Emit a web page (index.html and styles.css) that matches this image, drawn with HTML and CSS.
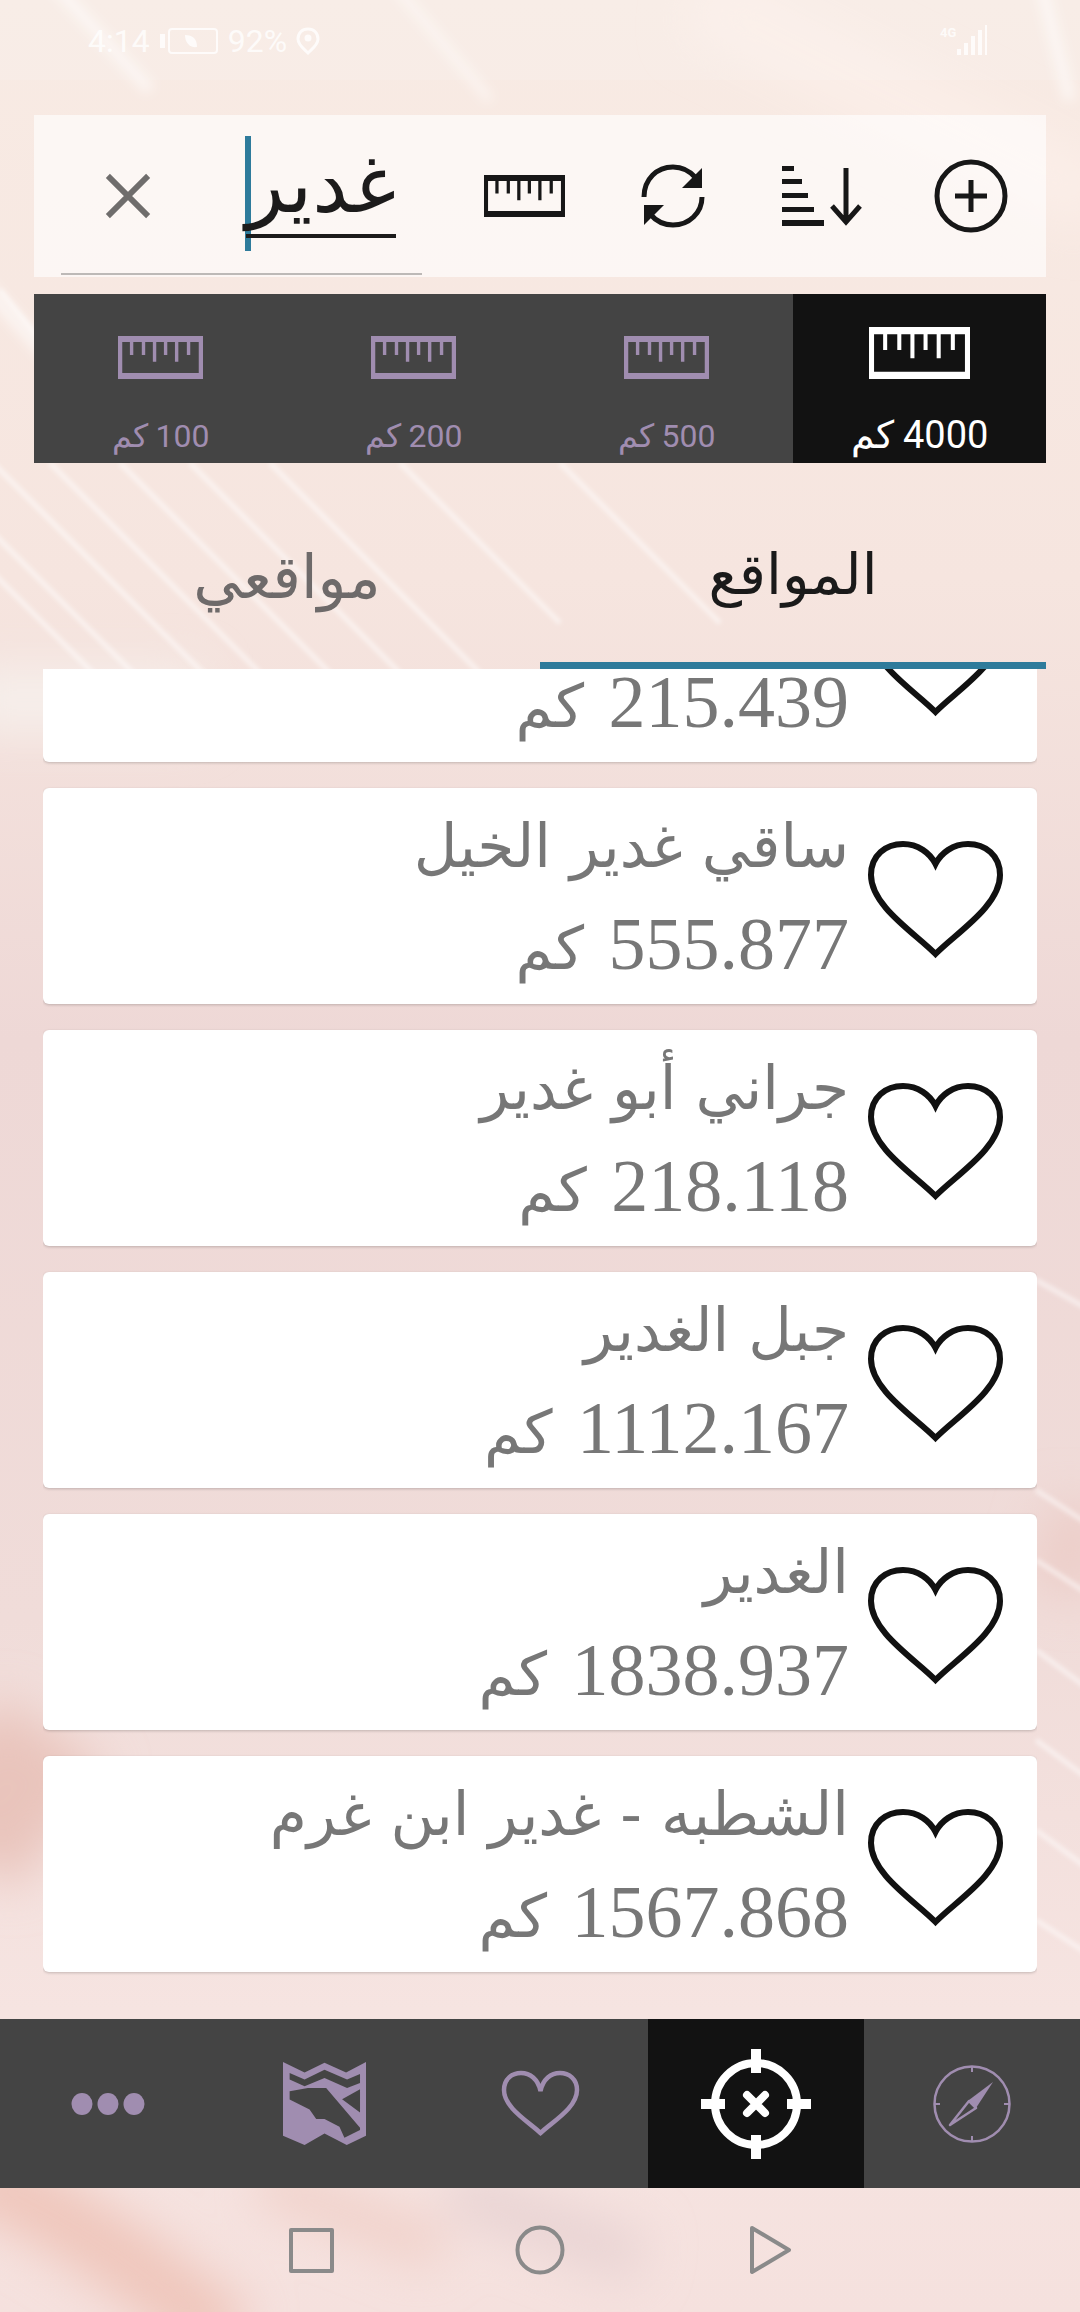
FILE: index.html
```html
<!DOCTYPE html>
<html lang="ar">
<head>
<meta charset="utf-8">
<link rel="stylesheet" href="styles.css">
</head>
<body>
<svg width="0" height="0" class="defs">
  <symbol id="ruler" viewBox="0 0 100 50" preserveAspectRatio="none">
    <path d="M0 0H100V50H0ZM5 7V43H95V7H85V22H81V7H71V30H67V7H58V22H54V7H45V30H41V7H32V22H28V7H18V22H14V7Z" fill-rule="evenodd"/>
  </symbol>
  <symbol id="heart" viewBox="0 0 137 119">
    <path d="M68.500 114C48 93 4 66 4 35C4 15 19 4 36 4C51 4 63 13 68.500 24C74 13 86 4 101 4C118 4 133 15 133 35C133 66 89 93 68.500 114Z" fill="none" stroke="currentColor" stroke-width="6" stroke-linejoin="miter"/>
  </symbol>
  <filter id="thin" x="-20%" y="-20%" width="140%" height="140%"><feGaussianBlur stdDeviation="2"/></filter>
  <filter id="soft" x="-20%" y="-20%" width="140%" height="140%"><feGaussianBlur stdDeviation="6"/></filter>
  <filter id="softer" x="-20%" y="-20%" width="140%" height="140%"><feGaussianBlur stdDeviation="24"/></filter>
</svg>

<div class="phone">
  <svg class="wallpaper" viewBox="0 0 1080 2312">
    <defs>
      <linearGradient id="wall" x1="0" y1="0" x2="0" y2="1">
        <stop offset="0" stop-color="#f8ebe4"/>
        <stop offset=".25" stop-color="#f6e5df"/>
        <stop offset=".45" stop-color="#eed8d6"/>
        <stop offset=".7" stop-color="#f0dcd9"/>
        <stop offset=".87" stop-color="#f6e4e1"/>
        <stop offset="1" stop-color="#f5e1de"/>
      </linearGradient>
    </defs>
    <rect width="1080" height="2312" fill="url(#wall)"/>
    <g filter="url(#softer)" fill="none" stroke-width="70">
      <path d="M-40 2170C60 2210 130 2260 230 2340" stroke="#efc6bb"/>
      <path d="M260 2180L440 2250" stroke="#f0cfc7" stroke-width="40"/>
      <path d="M450 2190L640 2260" stroke="#e8d3d3" stroke-width="50"/>
      <path d="M-40 700H200" stroke="#f6f0ec" stroke-width="60"/>
      <path d="M-50 1750C-20 1780 20 1800 60 1830" stroke="#e9c4bc" stroke-width="150"/>
      <path d="M1100 1560L1040 1540" stroke="#eccdc8" stroke-width="90"/>
      <path d="M700 0L1100 200" stroke="#fbeee8"/>
    </g>
    <g filter="url(#thin)" fill="none" stroke="#fff" stroke-opacity=".5" stroke-width="5">
      <path d="M-30 440L210 680"/>
      <path d="M-30 510L140 680"/>
      <path d="M-10 570L100 680"/>
      <path d="M50 463L260 673"/>
      <path d="M120 463L330 673"/>
      <path d="M190 463L400 673"/>
      <path d="M270 463L480 673"/>
      <path d="M400 463L560 623"/>
      <path d="M560 463L720 623"/>
      <path d="M0 290L40 340"/>
      <path d="M1036 1280L1090 1310"/>
      <path d="M1036 1490L1090 1525"/>
      <path d="M1036 1560L1090 1595"/>
      <path d="M1036 1650L1090 1690"/>
      <path d="M1036 1740L1090 1780"/>
      <path d="M1036 1830L1090 1870"/>
      <path d="M1036 1920L1090 1955"/>
    </g>
    <g filter="url(#soft)" fill="none" stroke="#fff" stroke-opacity=".55">
      <path d="M50 -20L150 90" stroke-width="12"/>
      <path d="M390 -20L490 100" stroke-width="8"/>
      <path d="M1040 -20L1070 100" stroke-width="12"/>
      <path d="M-20 280L60 370" stroke-width="14"/>
    </g>
  </svg>

  <div class="status">
    <div class="status-left">
      <span>4:14</span>
      <svg class="battery" viewBox="0 0 58 26"><path d="M0 6h5v14H0z"/><rect x="9" y="1" width="48" height="24" rx="3" fill="none" stroke="currentColor" stroke-width="2"/><path d="M25 7c8 0 12 4 12 12c-7 1-12-4-12-12z"/></svg>
      <span>92%</span>
      <svg class="pin" viewBox="0 0 24 28"><path d="M12 2C6 2 2 6 2 12c0 6 6 10 10 14c4-4 10-8 10-14C22 6 18 2 12 2z" fill="none" stroke="currentColor" stroke-width="3"/><circle cx="12" cy="11" r="3.500"/></svg>
    </div>
    <div class="signal">
      <span class="signal-text">4G</span>
      <svg viewBox="0 0 32 30"><path d="M1 24h4v6H1zM8 18h4v12H8zM15 11h4v19h-4zM22 5h4v25h-4zM29 0h2v30h-2z"/></svg>
    </div>
  </div>

  <div class="search-bar">
    <div class="search-box">
      <svg class="icon-close" viewBox="0 0 48 48"><path d="M3 3L45 45M45 3L3 45" stroke="#6f6d6c" stroke-width="6"/></svg>
      <div class="search-input"><span class="caret"></span><span class="query">غدير</span></div>
      <div class="search-line"></div>
    </div>
    <svg class="icon-ruler"><use href="#ruler"/></svg>
    <svg class="icon-refresh" viewBox="0 0 66 66"><path d="M4 34C4 16 17 4 33 4C42 4 50 8 56 15M62 34C62 50 49 62 33 62C24 62 16 58 10 51" fill="none" stroke="#171717" stroke-width="5"/><path d="M62 5V25H42ZM4 62V42H24Z" fill="#171717"/></svg>
    <svg class="icon-sort" viewBox="0 0 81 60"><path d="M0 0h12v5H0zM0 13h20v5H0zM0 27h26v5H0zM0 41h32v5H0zM0 54h42v6H0z" fill="#171717"/><path d="M64 2V56M50 40L64 56L78 40" fill="none" stroke="#171717" stroke-width="5"/></svg>
    <svg class="icon-plus" viewBox="0 0 74 74"><circle cx="37" cy="37" r="34" fill="none" stroke="#171717" stroke-width="5"/><path d="M37 21V53M21 37H53" stroke="#171717" stroke-width="5"/></svg>
  </div>

  <div class="ranges">
    <div class="range"><svg><use href="#ruler"/></svg><span dir="rtl">100 كم</span></div>
    <div class="range"><svg><use href="#ruler"/></svg><span dir="rtl">200 كم</span></div>
    <div class="range"><svg><use href="#ruler"/></svg><span dir="rtl">500 كم</span></div>
    <div class="range active"><svg><use href="#ruler"/></svg><span dir="rtl">4000 كم</span></div>
  </div>

  <div class="tabs">
    <div class="tab">مواقعي</div>
    <div class="tab selected">المواقع</div>
  </div>

  <div class="list">
    <div class="list-inner">
      <div class="card"><svg class="heart"><use href="#heart"/></svg><div class="card-text"><div class="name">&nbsp;</div><div class="dist">215.439 <span>كم</span></div></div></div>
      <div class="card"><svg class="heart"><use href="#heart"/></svg><div class="card-text"><div class="name">ساقي غدير الخيل</div><div class="dist">555.877 <span>كم</span></div></div></div>
      <div class="card"><svg class="heart"><use href="#heart"/></svg><div class="card-text"><div class="name">جراني أبو غدير</div><div class="dist">218.118 <span>كم</span></div></div></div>
      <div class="card"><svg class="heart"><use href="#heart"/></svg><div class="card-text"><div class="name">جبل الغدير</div><div class="dist">1112.167 <span>كم</span></div></div></div>
      <div class="card"><svg class="heart"><use href="#heart"/></svg><div class="card-text"><div class="name">الغدير</div><div class="dist">1838.937 <span>كم</span></div></div></div>
      <div class="card"><svg class="heart"><use href="#heart"/></svg><div class="card-text"><div class="name">الشطبه - غدير ابن غرم</div><div class="dist">1567.868 <span>كم</span></div></div></div>
    </div>
  </div>

  <div class="bottom-nav">
    <div class="nav-item">
      <svg class="icon-dots" viewBox="0 0 74 22"><ellipse cx="11" cy="11" rx="10.500" ry="11"/><ellipse cx="37" cy="11" rx="10.500" ry="11"/><ellipse cx="63" cy="11" rx="10.500" ry="11"/></svg>
    </div>
    <div class="nav-item">
      <svg class="icon-map" viewBox="0 0 250 250"><path d="M0 0L65 32L125 2L190 32L250 0V222L192 250L125 215L65 250L0 222ZM20 33V53L65 73L125 48L193 78L232 63V36L193 53L125 23L65 53ZM20 88V113L80 143L100 172H125L170 195L185 228L232 205V198L130 78L75 78ZM178 112L232 152V82Z" fill-rule="evenodd"/></svg>
    </div>
    <div class="nav-item">
      <svg class="icon-navheart" viewBox="0 0 79 67"><path d="M39.500 63C28 52 3 38 3 20C3 9 11 3 20 3C29 3 37 9 39.500 21C42 9 50 3 59 3C68 3 76 9 76 20C76 38 51 52 39.500 63Z" fill="none" stroke="currentColor" stroke-width="4.500"/></svg>
    </div>
    <div class="nav-item active">
      <svg class="icon-target" viewBox="0 0 110 110"><circle cx="55" cy="55" r="41" fill="none" stroke="#fff" stroke-width="8"/><path d="M55 0V24M55 86V110M0 55H24M86 55H110" stroke="#fff" stroke-width="10"/><path d="M46 46L64 64M64 46L46 64" stroke="#fff" stroke-width="8" stroke-linecap="round"/></svg>
    </div>
    <div class="nav-item">
      <svg class="icon-compass" viewBox="0 0 78 78"><circle cx="39" cy="39" r="37.500" fill="none" stroke="currentColor" stroke-width="2.500"/><path d="M39 2v5M39 71v5M2 39h5M71 39h5" stroke="currentColor" stroke-width="2"/><path d="M60 17L36 35L43 43Z"/><path d="M36 36L43 43L17 60Z" fill="none" stroke="currentColor" stroke-width="2.500" stroke-linejoin="round"/></svg>
    </div>
  </div>

  <div class="system-nav">
    <svg class="sys-square" viewBox="0 0 45 45"><path d="M2 2H43V43H2Z" fill="none" stroke="#8a8a8a" stroke-width="4" stroke-linejoin="round"/></svg>
    <svg class="sys-circle" viewBox="0 0 50 50"><circle cx="25" cy="25" r="22.500" fill="none" stroke="#8a8a8a" stroke-width="4"/></svg>
    <svg class="sys-back" viewBox="0 0 43 50"><path d="M3 3L40 25L3 47Z" fill="none" stroke="#8a8a8a" stroke-width="4" stroke-linejoin="round"/></svg>
  </div>
</div>
</body>
</html>
```
FILE: styles.css
```css
* {
  box-sizing: border-box;
}

html, body {
  margin: 0;
  padding: 0;
}

.defs {
  position: absolute;
}

.phone {
  position: relative;
  isolation: isolate;
  width: 1080px;
  height: 2312px;
  overflow: hidden;
  display: flex;
  flex-direction: column;
  font-family: "DejaVu Sans", sans-serif;
  background: #f5e3de;
}

.wallpaper {
  position: absolute;
  left: 0;
  top: 0;
  width: 1080px;
  height: 2312px;
  z-index: -1;
}

.status {
  height: 80px;
  padding: 20px 92px 0 88px;
  display: flex;
  justify-content: space-between;
  color: rgba(255,255,255,.78);
  fill: rgba(255,255,255,.78);
  background: rgba(255,255,255,.12);
  font-family: Roboto, sans-serif;
  font-size: 32px;
}

.status-left {
  display: flex;
  align-items: center;
  gap: 10px;
  height: 42px;
}

.battery {
  width: 58px;
  height: 26px;
}

.pin {
  width: 24px;
  height: 28px;
  margin-left: -1px;
}

.signal {
  position: relative;
  width: 48px;
  height: 36px;
}

.signal svg {
  position: absolute;
  right: 0;
  top: 5px;
  width: 32px;
  height: 30px;
}

.signal-text {
  position: absolute;
  left: 0;
  top: 5px;
  font-size: 13px;
  font-weight: 700;
}

.search-bar {
  margin: 35px 34px 0;
  height: 162px;
  background: rgba(255,255,255,.62);
  display: flex;
  align-items: center;
  position: relative;
}

.search-box {
  width: 361px;
  margin-left: 27px;
  height: 162px;
  position: relative;
  display: flex;
  align-items: center;
}

.icon-close {
  width: 46px;
  height: 46px;
  margin-left: 44px;
}

.search-input {
  position: absolute;
  left: 184px;
  top: 21px;
  width: 151px;
  height: 115px;
}

.caret {
  position: absolute;
  left: 0;
  top: 0;
  width: 6px;
  height: 115px;
  background: #2e7b9b;
}

.query {
  position: absolute;
  right: 0;
  top: 0;
  font-size: 80px;
  line-height: 98px;
  color: #1c1b1b;
  border-bottom: 4px solid #1c1b1b;
}

.search-line {
  position: absolute;
  left: 0;
  right: 0;
  bottom: 2px;
  height: 2px;
  background: #bdb9b7;
}

.icon-ruler {
  width: 81px;
  height: 42px;
  margin-left: 62px;
  fill: #171717;
}

.icon-refresh {
  width: 66px;
  height: 66px;
  margin-left: 75px;
}

.icon-sort {
  width: 81px;
  height: 60px;
  margin-left: 76px;
}

.icon-plus {
  width: 74px;
  height: 74px;
  margin-left: 71px;
}

.ranges {
  margin: 17px 34px 0;
  height: 169px;
  display: grid;
  grid-template-columns: repeat(4, 1fr);
  background: #444;
}

.range {
  display: flex;
  flex-direction: column;
  align-items: center;
  color: #a08db0;
  fill: #a08db0;
  padding-top: 42px;
}

.range svg {
  width: 85px;
  height: 43px;
}

.range span {
  margin-top: 37px;
  font-family: Roboto, sans-serif;
  font-size: 32px;
  line-height: 40px;
}

.range.active {
  background: #121212;
  color: #fff;
  fill: #fff;
  padding-top: 33px;
}

.range.active svg {
  width: 101px;
  height: 52px;
}

.range.active span {
  margin-top: 36px;
  font-size: 38px;
}

.tabs {
  margin: 0 34px;
  height: 206px;
  display: grid;
  grid-template-columns: 1fr 1fr;
}

.tab {
  display: flex;
  align-items: center;
  justify-content: center;
  font-size: 60px;
  color: #6e6a6a;
  padding-top: 22px;
}

.tab.selected {
  font-size: 57px;
  color: #1a1a1a;
  border-bottom: 7px solid #2e7b9b;
}

.list {
  height: 1350px;
  overflow: hidden;
  margin: 0 43px;
}

.list-inner {
  margin-top: -123px;
  display: flex;
  flex-direction: column;
  gap: 26px;
}

.card {
  height: 216px;
  flex: none;
  direction: rtl;
  background: #fff;
  border-radius: 6px;
  box-shadow: 0 1px 3px rgba(0,0,0,.2);
  display: flex;
  padding-right: 33px;
  align-items: flex-start;
}

.heart {
  width: 137px;
  height: 119px;
  margin-top: 52px;
  color: #111;
  margin-left: 18px;
}

.card-text {
  color: #777;
  padding-top: 8px;
}

.name {
  font-size: 60px;
  line-height: 100px;
}

.dist {
  font-family: "Liberation Serif", serif;
  font-size: 74px;
  line-height: 96px;
  letter-spacing: 1px;
}

.dist span {
  font-family: "DejaVu Sans", sans-serif;
  font-size: 60px;
  letter-spacing: 0;
  margin-right: 6px;
}

.bottom-nav {
  height: 169px;
  background: #444;
  display: grid;
  grid-template-columns: repeat(5, 216px);
  color: #a08db0;
  fill: #a08db0;
}

.nav-item {
  display: flex;
  align-items: center;
  justify-content: center;
}

.nav-item.active {
  background: #121212;
}

.icon-dots {
  width: 74px;
  height: 22px;
}

.icon-map {
  width: 83px;
  height: 83px;
}

.icon-navheart {
  width: 79px;
  height: 67px;
}

.icon-target {
  width: 110px;
  height: 110px;
}

.icon-compass {
  width: 78px;
  height: 78px;
}

.system-nav {
  height: 124px;
  display: flex;
  align-items: center;
  padding-left: 289px;
}

.sys-square {
  width: 45px;
  height: 45px;
}

.sys-circle {
  width: 50px;
  height: 50px;
  margin-left: 181px;
}

.sys-back {
  width: 43px;
  height: 50px;
  margin-left: 184px;
}
```
